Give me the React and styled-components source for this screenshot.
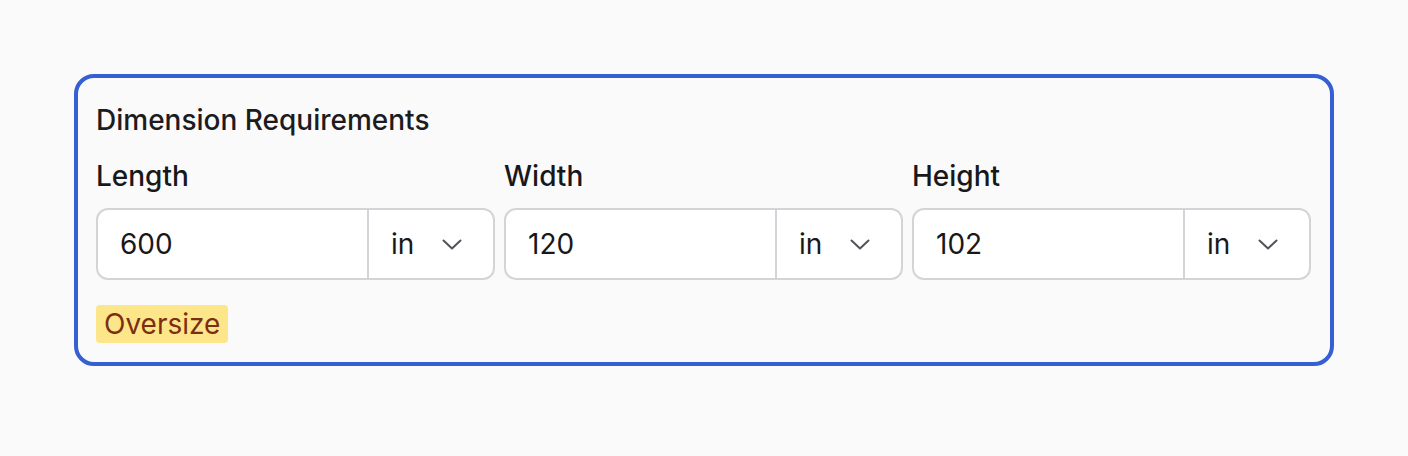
import React from "react";
import styled, { createGlobalStyle } from "styled-components";

const Global = createGlobalStyle`
  html, body { margin: 0; padding: 0; background: #fafafa; }
  body { font-family: Inter, "Noto Sans", sans-serif; color: #18181b; }
`;

const Page = styled.div`
  box-sizing: border-box;
  width: 1408px;
  min-height: 456px;
  padding: 74px;
  background: #fafafa;
`;

const Card = styled.section`
  box-sizing: border-box;
  width: 1260px;
  border: 4px solid #355fd3;
  border-radius: 20px;
  padding: 24px 19px 19px 18px;
  display: flex;
  flex-direction: column;
  align-items: flex-start;
`;

const Title = styled.h2`
  margin: 0;
  font-size: 28px;
  line-height: 36px;
  font-weight: 450;
  color: #1c1c1e;
`;

const Fields = styled.div`
  align-self: stretch;
  display: grid;
  grid-template-columns: repeat(3, 1fr);
  gap: 9px;
  margin-top: 20px;
`;

const Field = styled.div`
  display: flex;
  flex-direction: column;
  gap: 14px;
`;

const Label = styled.label`
  font-size: 28px;
  line-height: 36px;
  font-weight: 500;
  color: #18181b;
`;

const Group = styled.div`
  box-sizing: border-box;
  display: flex;
  height: 72px;
  border: 2px solid #d4d4d8;
  border-radius: 12px;
  background: #fff;
  overflow: hidden;
`;

const Value = styled.div`
  flex: 1;
  display: flex;
  align-items: center;
  padding-left: 22px;
  font-size: 28px;
  color: #18181b;
`;

const Unit = styled.div`
  box-sizing: border-box;
  width: 126px;
  display: flex;
  align-items: center;
  justify-content: space-between;
  padding: 0 31px 0 22px;
  border-left: 2px solid #d4d4d8;
  font-size: 28px;
  color: #18181b;
`;

const Badge = styled.span`
  margin-top: 25px;
  padding: 2px 8px;
  border-radius: 4px;
  background: #fde68a;
  color: #7c2d12;
  font-size: 28px;
  line-height: 34px;
`;

const Chevron = () => (
  <svg width="20" height="11" viewBox="0 0 20 11" fill="none">
    <polyline points="1.5,1.5 10,9.5 18.5,1.5" stroke="#52525b" strokeWidth="2" strokeLinecap="round" strokeLinejoin="round" />
  </svg>
);

const data = [
  { label: "Length", value: "600" },
  { label: "Width", value: "120" },
  { label: "Height", value: "102" },
];

export default function App() {
  return (
    <Page>
      <Global />
      <Card>
        <Title>Dimension Requirements</Title>
        <Fields>
          {data.map((d) => (
            <Field key={d.label}>
              <Label>{d.label}</Label>
              <Group>
                <Value>{d.value}</Value>
                <Unit>
                  <span>in</span>
                  <Chevron />
                </Unit>
              </Group>
            </Field>
          ))}
        </Fields>
        <Badge>Oversize</Badge>
      </Card>
    </Page>
  );
}
